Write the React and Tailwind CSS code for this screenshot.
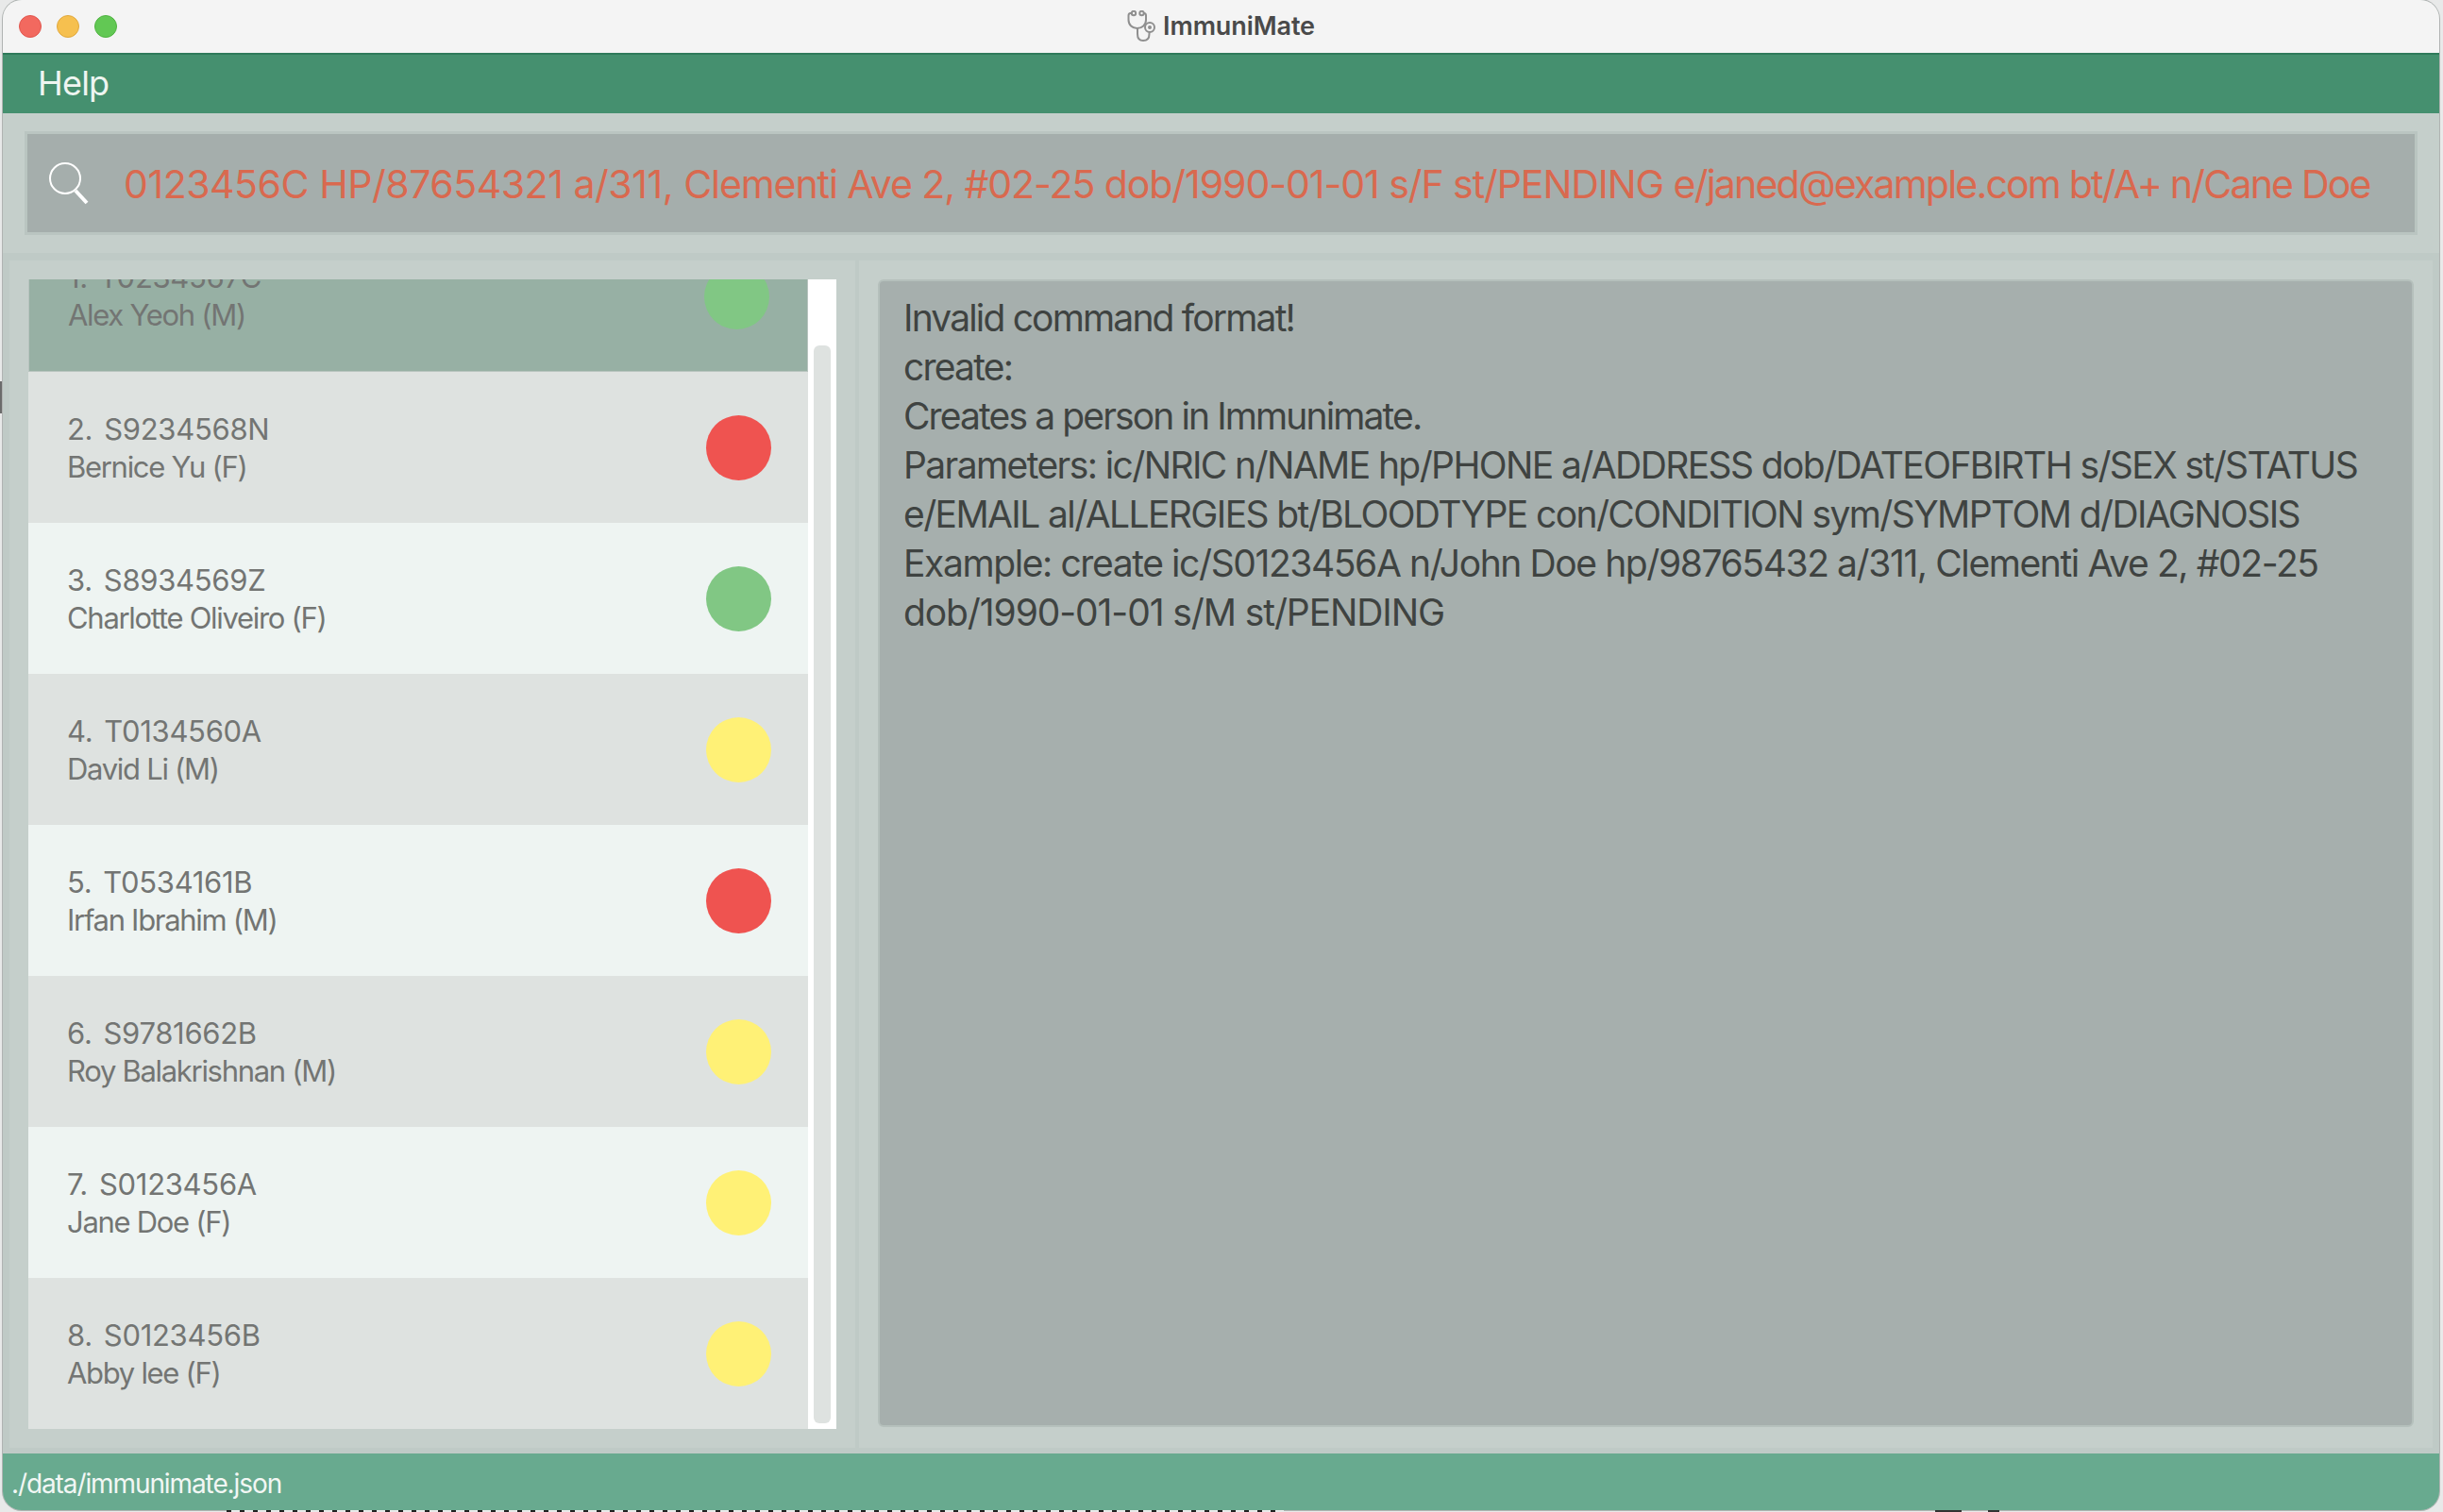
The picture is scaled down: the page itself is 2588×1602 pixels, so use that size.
import React from "react"

const patients = [
  { num: "1.", id: "T0234567C", name: "Alex Yeoh (M)", status: "green", selected: true },
  { num: "2.", id: "S9234568N", name: "Bernice Yu (F)", status: "red" },
  { num: "3.", id: "S8934569Z", name: "Charlotte Oliveiro (F)", status: "green" },
  { num: "4.", id: "T0134560A", name: "David Li (M)", status: "yellow" },
  { num: "5.", id: "T0534161B", name: "Irfan Ibrahim (M)", status: "red" },
  { num: "6.", id: "S9781662B", name: "Roy Balakrishnan (M)", status: "yellow" },
  { num: "7.", id: "S0123456A", name: "Jane Doe (F)", status: "yellow" },
  { num: "8.", id: "S0123456B", name: "Abby lee (F)", status: "yellow" },
]

const dotColors = {
  green: "bg-[#81c784]",
  red: "bg-[#ef5350]",
  yellow: "bg-[#fff176]",
}

const resultLines = [
  { text: "Invalid command format!", track: "tracking-[-1.83px]" },
  { text: "create:", track: "tracking-[-1.8px]" },
  { text: "Creates a person in Immunimate.", track: "tracking-[-1.88px]" },
  { text: "Parameters: ic/NRIC n/NAME hp/PHONE a/ADDRESS dob/DATEOFBIRTH s/SEX st/STATUS", track: "tracking-[-1.6px]" },
  { text: "e/EMAIL al/ALLERGIES bt/BLOODTYPE con/CONDITION sym/SYMPTOM d/DIAGNOSIS", track: "tracking-[-1.6px]" },
  { text: "Example: create ic/S0123456A n/John Doe hp/98765432 a/311, Clementi Ave 2, #02-25", track: "tracking-[-1.4px]" },
  { text: "dob/1990-01-01 s/M st/PENDING", track: "tracking-[-1.1px]" },
]

const PatientRow = ({ patient, index }) => {
  let bg = index % 2 === 0 ? "bg-[#eef4f2] pr-[39px]" : "bg-[#dee2e0] pr-[39px]"
  if (patient.selected) bg = "bg-[#97b0a4] border border-[#b8c4bf] pr-[40px]"
  return (
    <div className={`flex h-[160px] shrink-0 items-center justify-between pl-[41px] ${bg}`}>
      <div className={`flex flex-col text-[31px] leading-[40px] text-[#737573] ${patient.selected ? "mt-0" : "mt-[2px]"}`}>
        <div className="flex gap-[12px] tracking-[-0.3px]">
          <span>{patient.num}</span>
          <span>{patient.id}</span>
        </div>
        <span className="tracking-[-1.3px]">{patient.name}</span>
      </div>
      <div className={`h-[69px] w-[69px] rounded-full ${dotColors[patient.status]}`}></div>
    </div>
  )
}

const App = () => {
  return (
    <div className="flex h-[1602px] w-[2588px] overflow-hidden bg-[#e8e9e9] font-['Inter',sans-serif]">
      {/* Desktop peeking out around the window */}
      <div className="w-[3px] shrink-0 pt-[404px]">
        <div className="h-[34px] bg-[#6b6b6b]"></div>
      </div>

      <div className="flex w-[2581px] shrink-0 flex-col">
        <div className="flex h-[1600px] shrink-0 flex-col overflow-hidden rounded-[20px] bg-[#bfcac6] shadow-[0_0_0_1px_#b0b3b2]">
          {/* Title bar */}
          <div className="grid h-[56px] shrink-0 grid-cols-[1fr_auto_1fr] items-center bg-[#f4f4f4] px-[17px]">
            <div className="flex gap-[16px]">
              <div className="h-[24px] w-[24px] rounded-full border border-[#e0564e] bg-[#f2695f]"></div>
              <div className="h-[24px] w-[24px] rounded-full border border-[#e0a83e] bg-[#f6c04f]"></div>
              <div className="h-[24px] w-[24px] rounded-full border border-[#4fb240] bg-[#62c854]"></div>
            </div>
            <div className="flex items-center gap-[8px]">
              <svg className="h-[34px] w-[30px]" viewBox="8 8 30 34" fill="none" stroke="#8f8f8f" strokeWidth="2" strokeLinecap="round">
                <circle cx="15" cy="11" r="2.2" />
                <circle cx="23.5" cy="11" r="2.2" />
                <path d="M12.5 11 H11.5 Q9.5 11 9.5 13.5 V18 C9.5 23.5 13.5 27 18.5 27 C24 27 28 23.5 28 18 V13.5 Q28 11 26 11" />
                <path d="M19 27 V33 C19 37.5 21.5 40 25 40 C29 40 31.5 37.5 31.5 33 V31.5" />
                <circle cx="32" cy="26" r="5" />
                <circle cx="32" cy="26" r="1" />
              </svg>
              <span className="text-[27px] font-semibold tracking-[-0.1px] text-[#4a4a4a]">ImmuniMate</span>
            </div>
            <div></div>
          </div>

          {/* Menu bar */}
          <div className="flex h-[64px] shrink-0 items-center border-t-2 border-[#2f7a5a] bg-[#45906f] pb-[2px] pl-[37px]">
            <span className="text-[36px] tracking-[-0.8px] text-[#eef5f1]">Help</span>
          </div>

          {/* Command box */}
          <div className="flex h-[148px] shrink-0 items-center bg-[#c5cfcb] px-[23px]">
            <div className="flex h-[110px] w-[2536px] items-center border-[3px] border-[#bac5c1] bg-[#a5aeac] pl-[20px]">
              <svg className="h-[50px] w-[50px] shrink-0" viewBox="0 0 50 50" fill="none" stroke="#ffffff">
                <circle cx="20" cy="20" r="16" strokeWidth="2" />
                <path d="M31 33 L43 46" strokeWidth="4" />
              </svg>
              <span className="ml-[32px] mt-[3px] whitespace-nowrap text-[41px] text-[#d9694f]">
                <span className="tracking-[-0.45px]">0123456C HP/87654321 a/311, </span>
                <span className="tracking-[-1.06px]">Clementi Ave 2, #02-25 dob/1990-01-01 s/F st/PENDING </span>
                <span className="tracking-[-1.79px]">e/janed@example.com bt/A+ n/Cane Doe</span>
              </span>
            </div>
          </div>

          {/* Main area */}
          <div className="mx-[7px] mt-[8px] flex h-[1258px] shrink-0 bg-[#c5cfcb]">
            {/* Person list */}
            <div className="flex w-[900px] shrink-0 border-r-4 border-[#bfcac6] pl-[20px] pt-[20px]">
              <div className="flex h-[1218px] w-[856px] overflow-hidden">
                <div className="flex w-[826px] shrink-0 flex-col overflow-hidden">
                  <div className="-mt-[62px] flex flex-col">
                    {patients.map((patient, index) => (
                      <PatientRow key={patient.id} patient={patient} index={index} />
                    ))}
                  </div>
                </div>
                <div className="flex h-full w-[30px] shrink-0 flex-col bg-white px-[6px] pb-[6px] pt-[70px]">
                  <div className="flex-1 rounded-[6px] bg-[#dee2e0]"></div>
                </div>
              </div>
            </div>

            {/* Result display */}
            <div className="min-w-0 flex-1 pl-[20px] pr-[20px] pt-[20px]">
              <div className="h-[1216px] rounded-[6px] border-2 border-[#b5c0bc] bg-[#a6afad] px-[25px] pt-[13px] text-[39px] leading-[52px] text-[#3f4341]">
                {resultLines.map((line) => (
                  <div key={line.text} className={`whitespace-nowrap ${line.track}`}>{line.text}</div>
                ))}
              </div>
            </div>
          </div>

          {/* Status bar */}
          <div className="mt-[6px] flex flex-1 items-center bg-[#68aa8f] pl-[9px] pt-[4px]">
            <span className="text-[28px] tracking-[-1.1px] text-[#f2f7f4]">./data/immunimate.json</span>
          </div>
        </div>

        {/* Bits of the window behind */}
        <div className="flex h-[2px] shrink-0">
          <div className="ml-[237px] h-full w-[1120px] bg-[repeating-linear-gradient(90deg,#222222_0px,#222222_5px,#e8e9e9_5px,#e8e9e9_14px)]"></div>
          <div className="ml-[690px] h-full w-[28px] bg-[#333333]"></div>
          <div className="ml-[28px] h-full w-[12px] bg-[#333333]"></div>
        </div>
      </div>
    </div>
  )
}

export default App
